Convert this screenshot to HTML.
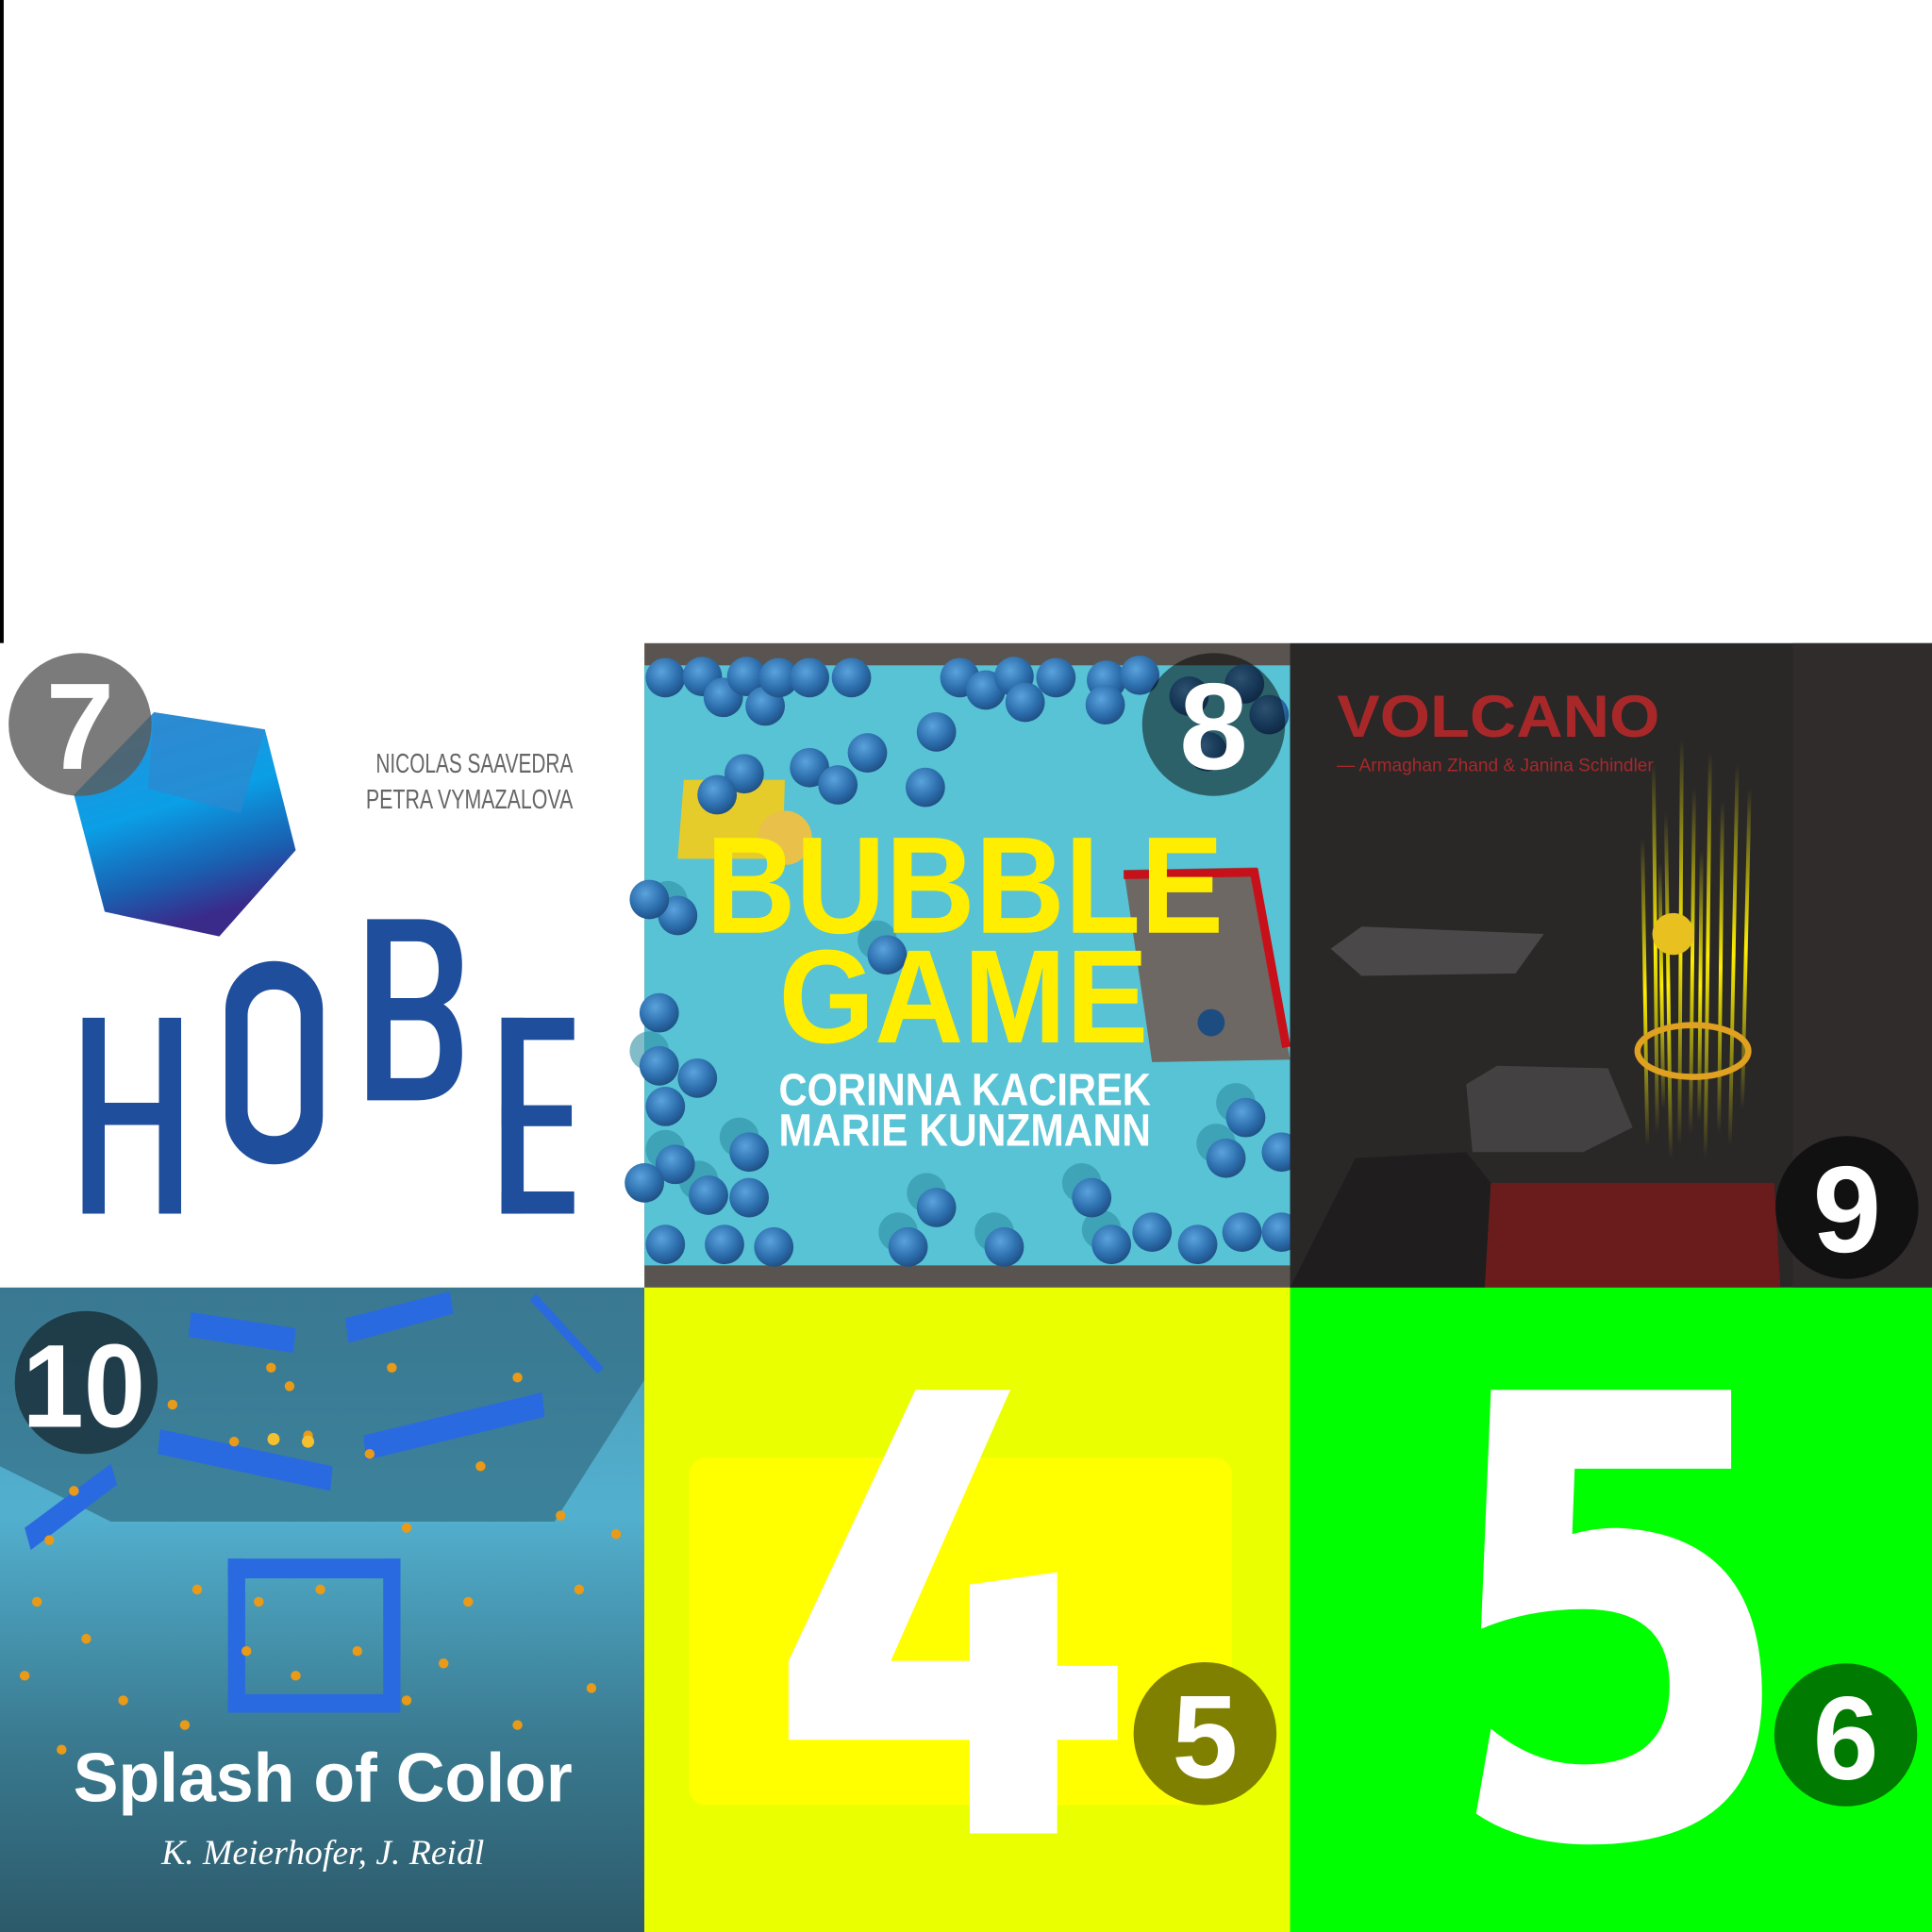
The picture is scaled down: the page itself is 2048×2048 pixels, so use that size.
<!DOCTYPE html>
<html><head><meta charset="utf-8"><style>
html,body{margin:0;padding:0;background:#fff;width:2048px;height:2048px;overflow:hidden}
#w{position:absolute;left:0;top:0;width:1568px;height:1568px;transform:scale(1.306122);transform-origin:0 0}
svg{position:absolute;left:0;top:0}
.b circle{r:16px}
.sh circle{r:16px}
</style></head><body><div id="w">
<svg width="1568" height="1568" viewBox="0 0 1568 1568" xmlns="http://www.w3.org/2000/svg">
<defs>
<radialGradient id="ball" cx="0.4" cy="0.35" r="0.7"><stop offset="0" stop-color="#5aa3dd"/><stop offset="0.6" stop-color="#2d6fae"/><stop offset="1" stop-color="#1d4c80"/></radialGradient>
<linearGradient id="gem" x1="0" y1="0" x2="0.3" y2="1"><stop offset="0" stop-color="#2d8fd8"/><stop offset="0.5" stop-color="#0a9fe6"/><stop offset="0.8" stop-color="#1a5fb0"/><stop offset="1" stop-color="#3a2a8a"/></linearGradient>
<linearGradient id="t10" x1="0" y1="0" x2="0" y2="1"><stop offset="0" stop-color="#4a9ab5"/><stop offset="0.35" stop-color="#52b0cf"/><stop offset="0.7" stop-color="#3a7a90"/><stop offset="1" stop-color="#2c5a6a"/></linearGradient>
<linearGradient id="streak" x1="0" y1="0" x2="0" y2="1"><stop offset="0" stop-color="#ffff00" stop-opacity="0"/><stop offset="0.5" stop-color="#ffee00"/><stop offset="1" stop-color="#ffff00" stop-opacity="0"/></linearGradient>
</defs>
<rect x="0" y="0" width="3" height="522" fill="#000"/>

<!-- tile 7 -->
<rect x="0" y="522" width="523" height="523" fill="#fff"/>
<polygon points="125,578 215,592 240,690 178,760 85,740 60,645" fill="url(#gem)"/>
<polygon points="125,578 215,592 195,660 120,640" fill="#2f87cf" opacity="0.7"/>
<circle cx="65" cy="588" r="58" fill="rgba(90,90,90,0.8)"/>
<text x="65" y="624" font-family="Liberation Sans" font-weight="bold" font-size="100" fill="#fff" text-anchor="middle">7</text>
<g font-family="Liberation Sans" font-size="22" fill="#666" text-anchor="end">
<text x="465" y="627" textLength="160" lengthAdjust="spacingAndGlyphs">NICOLAS SAAVEDRA</text>
<text x="465" y="656" textLength="168" lengthAdjust="spacingAndGlyphs">PETRA VYMAZALOVA</text>
</g>
<g fill="#1f4e9c">
<rect x="67" y="826" width="18" height="159"/><rect x="129" y="826" width="18" height="159"/><rect x="67" y="895" width="80" height="18"/>
<rect x="183" y="780" width="79" height="165" rx="39" /><rect x="201" y="803" width="43" height="119" rx="21" fill="#fff"/>
<path d="M298 746 H340 Q375 746 375 783 Q375 808 360 815 Q375 825 375 855 Q375 893 338 893 H298 Z M317 764 V810 H338 Q356 810 356 787 Q356 764 338 764 Z M317 828 V875 H340 Q357 875 357 851 Q357 828 340 828 Z" fill-rule="evenodd"/>
<rect x="407" y="826" width="18" height="159"/><rect x="407" y="826" width="59" height="18"/><rect x="407" y="897" width="57" height="17"/><rect x="407" y="967" width="59" height="18"/>
</g>

<!-- tile 8 -->
<rect x="523" y="522" width="524" height="523" fill="#59544f"/>
<rect x="523" y="540" width="524" height="487" fill="#58c3d4"/>
<polygon points="555,633 637,633 635,697 550,697" fill="#e6cc2a"/>
<circle cx="637" cy="680" r="22" fill="#e8c04a"/>
<polygon points="912,706 1020,704 1047,860 935,862" fill="#6d6863"/>
<polyline points="912,710 1018,708 1044,850" fill="none" stroke="#c8101a" stroke-width="7"/>
<circle cx="983" cy="830" r="11" fill="#1d4c80"/>
<g id="balls">
<g class="sh" fill="#2e8fa3" opacity="0.6" transform="translate(-8,-12)">
<circle cx="550" cy="743"/><circle cx="535" cy="865"/><circle cx="548" cy="945"/><circle cx="608" cy="935"/><circle cx="575" cy="970"/><circle cx="760" cy="980"/><circle cx="737" cy="1012"/><circle cx="815" cy="1012"/><circle cx="886" cy="972"/><circle cx="902" cy="1010"/><circle cx="1011" cy="907"/><circle cx="995" cy="940"/><circle cx="720" cy="775"/>
</g>
<g class="b" fill="url(#ball)">
<circle cx="540" cy="550"/><circle cx="570" cy="549"/><circle cx="587" cy="566"/><circle cx="606" cy="549"/><circle cx="621" cy="573"/><circle cx="632" cy="550"/><circle cx="657" cy="550"/><circle cx="691" cy="550"/>
<circle cx="779" cy="550"/><circle cx="800" cy="560"/><circle cx="823" cy="549"/><circle cx="832" cy="570"/><circle cx="857" cy="550"/><circle cx="898" cy="552"/><circle cx="897" cy="572"/><circle cx="925" cy="548"/>
<circle cx="760" cy="594"/><circle cx="704" cy="611"/><circle cx="657" cy="623"/><circle cx="680" cy="637"/><circle cx="751" cy="639"/><circle cx="604" cy="628"/><circle cx="582" cy="645"/>
<circle cx="550" cy="743"/><circle cx="527" cy="730"/><circle cx="720" cy="775"/>
<circle cx="535" cy="822"/><circle cx="535" cy="865"/><circle cx="566" cy="875"/><circle cx="540" cy="898"/>
<circle cx="548" cy="945"/><circle cx="523" cy="960"/><circle cx="608" cy="935"/><circle cx="575" cy="970"/><circle cx="608" cy="972"/>
<circle cx="540" cy="1010"/><circle cx="588" cy="1010"/><circle cx="628" cy="1012"/>
<circle cx="760" cy="980"/><circle cx="737" cy="1012"/><circle cx="815" cy="1012"/>
<circle cx="886" cy="972"/><circle cx="902" cy="1010"/><circle cx="935" cy="1000"/><circle cx="972" cy="1010"/><circle cx="1008" cy="1000"/>
<circle cx="1011" cy="907"/><circle cx="995" cy="940"/><circle cx="1040" cy="935"/><circle cx="1040" cy="1000"/>
<circle cx="965" cy="565"/><circle cx="1010" cy="555"/><circle cx="1030" cy="580"/><circle cx="980" cy="610"/>
</g>
</g>
<circle cx="985" cy="588" r="58" fill="rgba(0,0,0,0.5)"/>
<text x="985" y="624" font-family="Liberation Sans" font-weight="bold" font-size="100" fill="#fff" text-anchor="middle">8</text>
<g font-family="Liberation Sans" font-weight="bold" text-anchor="middle">
<text x="783" y="757" font-size="112" fill="#ffee00" textLength="420" lengthAdjust="spacingAndGlyphs">BUBBLE</text>
<text x="782" y="846" font-size="108" fill="#ffee00" textLength="300" lengthAdjust="spacingAndGlyphs">GAME</text>
<text x="783" y="897" font-size="37" fill="#fff" textLength="302" lengthAdjust="spacingAndGlyphs">CORINNA KACIREK</text>
<text x="783" y="930" font-size="37" fill="#fff" textLength="302" lengthAdjust="spacingAndGlyphs">MARIE KUNZMANN</text>
</g>

<!-- tile 9 -->
<rect x="1047" y="522" width="521" height="523" fill="#2a2727"/>
<rect x="1455" y="522" width="113" height="523" fill="#302c2c"/>
<polygon points="1080,770 1105,752 1253,758 1230,790 1105,792" fill="#4a4848"/>
<polygon points="1190,880 1215,865 1305,867 1325,915 1285,935 1195,935" fill="#434141"/>
<polygon points="1047,1045 1100,940 1190,935 1210,960 1205,1045" fill="#1f1d1d"/>
<polygon points="1210,960 1440,960 1445,1045 1205,1045" fill="#6a1c1c"/>
<g stroke="url(#streak)" stroke-width="3">
<line x1="1333" y1="680" x2="1337" y2="930"/><line x1="1342" y1="620" x2="1345" y2="920"/><line x1="1352" y1="660" x2="1356" y2="940"/><line x1="1365" y1="600" x2="1363" y2="930"/><line x1="1375" y1="640" x2="1372" y2="920"/><line x1="1388" y1="610" x2="1384" y2="940"/><line x1="1398" y1="650" x2="1395" y2="920"/><line x1="1410" y1="620" x2="1404" y2="930"/><line x1="1420" y1="640" x2="1414" y2="900"/><line x1="1347" y1="700" x2="1350" y2="900"/><line x1="1381" y1="690" x2="1379" y2="910"/>
</g>
<ellipse cx="1374" cy="853" rx="45" ry="21" fill="none" stroke="#e0a020" stroke-width="5"/>
<circle cx="1358" cy="758" r="17" fill="#e8c020"/>
<text x="1085" y="598" font-family="Liberation Sans" font-weight="bold" font-size="48" fill="#a8282a" textLength="262" lengthAdjust="spacingAndGlyphs">VOLCANO</text>
<text x="1085" y="626" font-family="Liberation Sans" font-size="15" fill="#a8282a" textLength="257" lengthAdjust="spacingAndGlyphs">— Armaghan Zhand &amp; Janina Schindler</text>
<circle cx="1499" cy="980" r="58" fill="#111"/>
<text x="1499" y="1016" font-family="Liberation Sans" font-weight="bold" font-size="100" fill="#fff" text-anchor="middle">9</text>

<!-- tile 10 -->
<rect x="0" y="1045" width="523" height="523" fill="url(#t10)"/>
<polygon points="0,1045 523,1045 523,1120 450,1235 90,1235 0,1190" fill="#2e6378" opacity="0.6"/>
<g fill="#2a6ae0">
<polygon points="155,1065 240,1078 238,1098 153,1085"/><polygon points="280,1070 365,1048 368,1066 283,1090"/><polygon points="130,1160 270,1190 268,1210 128,1180"/><polygon points="295,1165 440,1130 442,1150 297,1185"/><polygon points="20,1240 90,1188 95,1205 25,1258"/><polygon points="435,1050 490,1110 485,1115 430,1055"/>
<rect x="185" y="1265" width="140" height="16"/><rect x="185" y="1265" width="14" height="125"/><rect x="311" y="1265" width="14" height="125"/><rect x="185" y="1375" width="140" height="15"/>
</g>
<g fill="#e89a18">
<circle cx="220" cy="1110" r="4"/><circle cx="235" cy="1125" r="4"/><circle cx="318" cy="1110" r="4"/><circle cx="420" cy="1118" r="4"/><circle cx="250" cy="1165" r="4"/><circle cx="140" cy="1140" r="4"/><circle cx="190" cy="1170" r="4"/><circle cx="300" cy="1180" r="4"/><circle cx="390" cy="1190" r="4"/><circle cx="60" cy="1210" r="4"/><circle cx="40" cy="1250" r="4"/><circle cx="330" cy="1240" r="4"/><circle cx="455" cy="1230" r="4"/><circle cx="500" cy="1245" r="4"/><circle cx="160" cy="1290" r="4"/><circle cx="210" cy="1300" r="4"/><circle cx="260" cy="1290" r="4"/><circle cx="380" cy="1300" r="4"/><circle cx="470" cy="1290" r="4"/><circle cx="30" cy="1300" r="4"/><circle cx="70" cy="1330" r="4"/><circle cx="200" cy="1340" r="4"/><circle cx="240" cy="1360" r="4"/><circle cx="290" cy="1340" r="4"/><circle cx="330" cy="1380" r="4"/><circle cx="360" cy="1350" r="4"/><circle cx="100" cy="1380" r="4"/><circle cx="20" cy="1360" r="4"/><circle cx="150" cy="1400" r="4"/><circle cx="420" cy="1400" r="4"/><circle cx="50" cy="1420" r="4"/><circle cx="480" cy="1370" r="4"/><circle cx="250" cy="1170" r="5" fill="#f5c030"/><circle cx="222" cy="1168" r="5" fill="#f5c030"/>
</g>
<circle cx="70" cy="1122" r="58" fill="rgba(25,45,55,0.8)"/>
<text x="68" y="1158" font-family="Liberation Sans" font-weight="bold" font-size="96" fill="#fff" text-anchor="middle" textLength="100" lengthAdjust="spacingAndGlyphs">10</text>
<text x="262" y="1462" font-family="Liberation Sans" font-weight="bold" font-size="56" fill="#fff" text-anchor="middle" textLength="405" lengthAdjust="spacingAndGlyphs">Splash of Color</text>
<text x="262" y="1513" font-family="Liberation Serif" font-style="italic" font-size="28" fill="#fff" text-anchor="middle" textLength="262" lengthAdjust="spacingAndGlyphs">K. Meierhofer, J. Reidl</text>

<!-- tile 4 -->
<rect x="523" y="1045" width="524" height="523" fill="#eaff00"/>
<rect x="559" y="1183" width="441" height="282" rx="14" fill="#ffff00"/>
<polygon points="743,1128 820,1128 723,1348 787,1348 787,1286 858,1276 858,1352 907,1352 907,1412 858,1412 858,1488 787,1488 787,1412 640,1412 640,1348" fill="#fff"/>
<circle cx="978" cy="1407" r="58" fill="#808000"/>
<text x="978" y="1443" font-family="Liberation Sans" font-weight="bold" font-size="96" fill="#fff" text-anchor="middle">5</text>

<!-- tile 5 -->
<rect x="1047" y="1045" width="521" height="523" fill="#00ff00"/>
<path d="M1210 1128 H1405 V1192 H1278 L1276 1245 Q1295 1240 1312 1240 Q1430 1245 1430 1375 Q1430 1497 1290 1497 Q1235 1497 1198 1472 L1210 1403 Q1245 1432 1285 1432 Q1355 1432 1355 1368 Q1355 1306 1285 1306 Q1240 1306 1202 1322 Z" fill="#fff"/>
<circle cx="1498" cy="1408" r="58" fill="#007a00"/>
<text x="1498" y="1444" font-family="Liberation Sans" font-weight="bold" font-size="96" fill="#fff" text-anchor="middle">6</text>
</svg>
</div></body></html>
